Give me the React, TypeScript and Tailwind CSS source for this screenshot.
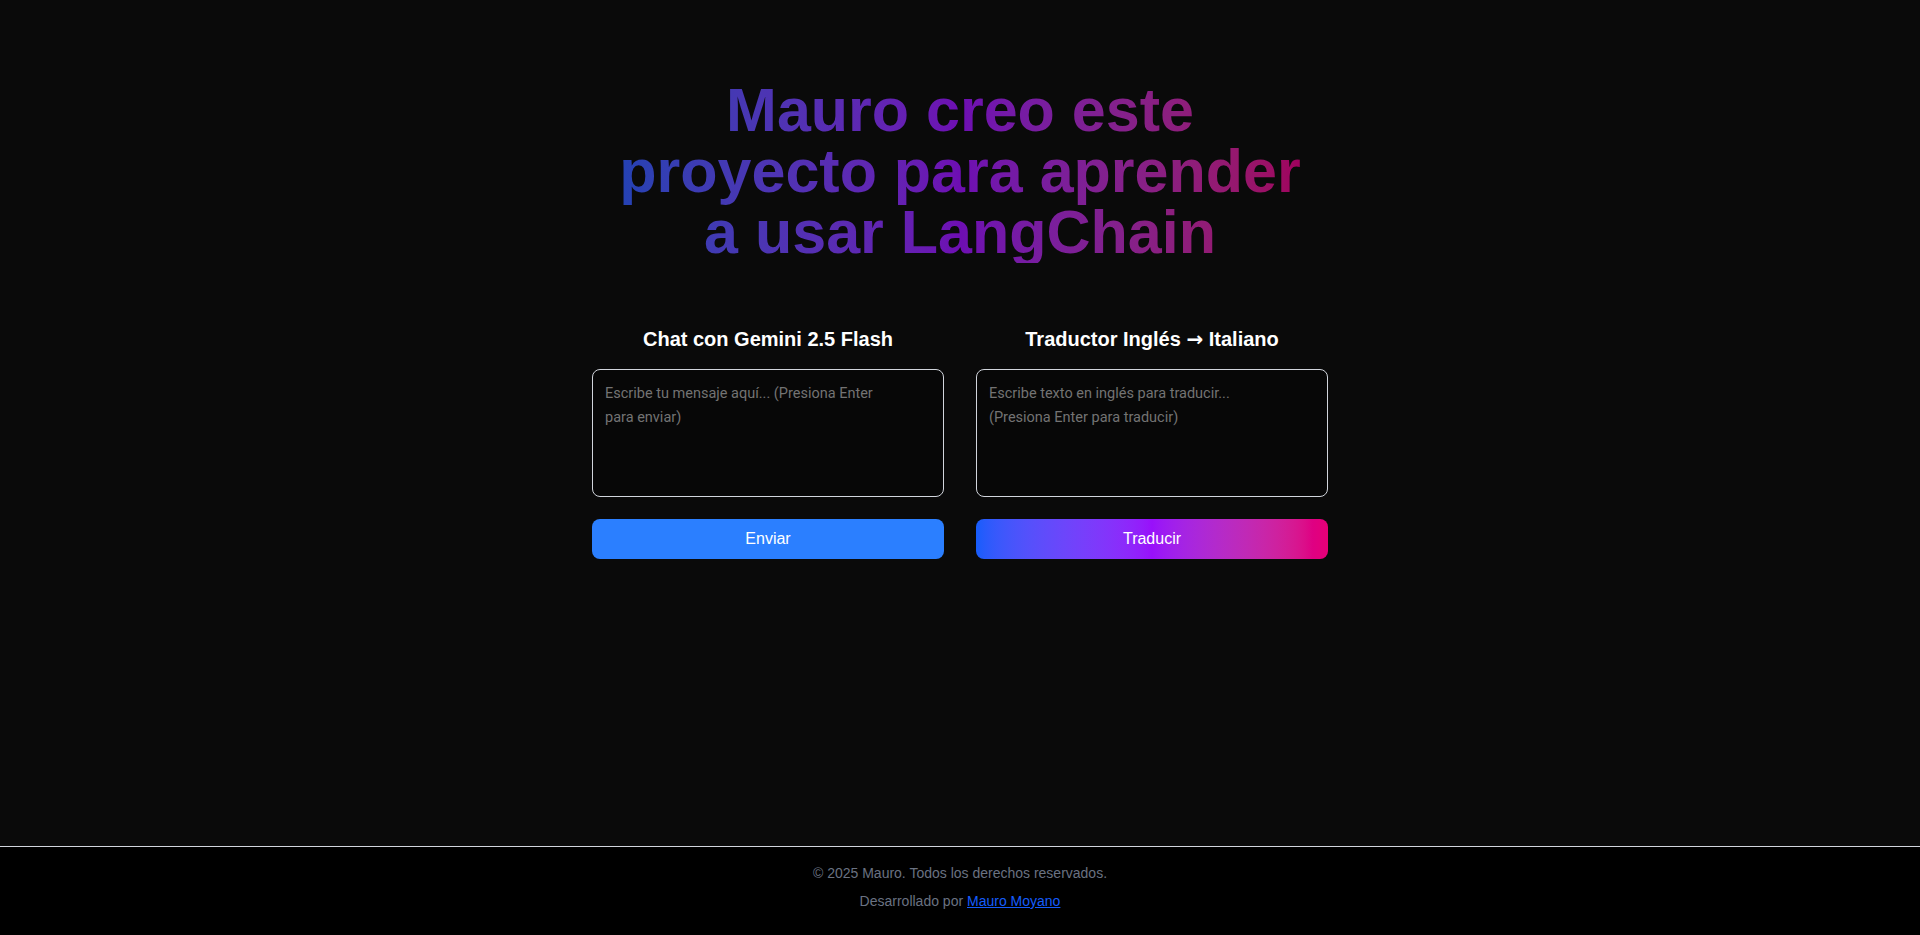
import { useState } from 'react';

function Panel({ title, placeholder, button, gradient }: { title: React.ReactNode; placeholder: string; button: string; gradient?: boolean }) {
  const [value, setValue] = useState('');
  return (
    <section className="flex flex-col">
      <h2 className="text-xl leading-7 font-bold text-white text-center mb-4">{title}</h2>
      <textarea
        value={value}
        onChange={e => setValue(e.target.value)}
        placeholder={placeholder}
        className="w-full h-32 resize-none rounded-lg border border-gray-300 bg-[#070707] px-3 py-3 font-['Roboto',Arial,sans-serif] text-[14.5px] leading-6 text-white placeholder:text-neutral-500 outline-none"
      />
      <button
        className={
          gradient
            ? 'mt-[22px] h-10 w-full rounded-lg bg-linear-to-r from-blue-600 via-purple-600 to-pink-600 text-base text-white'
            : 'mt-[22px] h-10 w-full rounded-lg bg-blue-500 text-base text-white'
        }
      >
        {button}
      </button>
    </section>
  );
}

export default function App() {
  return (
    <div className="min-h-screen flex flex-col bg-[#0a0a0a] font-['Liberation_Sans',Arial,sans-serif]">
      <main className="flex-1 pt-20">
        <div className="max-w-3xl mx-auto px-4">
          <h1 className="text-[61px] leading-[61px] font-bold text-center bg-linear-to-r from-blue-600 via-purple-600 to-pink-600 bg-clip-text text-transparent opacity-70">
            Mauro creo este
            <br />
            proyecto para aprender
            <br />
            a usar LangChain
          </h1>

          <div className="grid grid-cols-2 gap-8 mt-[62px]">
            <Panel
              title="Chat con Gemini 2.5 Flash"
              placeholder={'Escribe tu mensaje aquí... (Presiona Enter\npara enviar)'}
              button="Enviar"
            />
            <Panel
              title={
                <>
                  Traductor Inglés <span className="font-['DejaVu_Sans',sans-serif]">→</span> Italiano
                </>
              }
              placeholder={'Escribe texto en inglés para traducir...\n(Presiona Enter para traducir)'}
              button="Traducir"
              gradient
            />
          </div>
        </div>
      </main>

      <footer className="border-t border-gray-300 bg-black pt-4 pb-6 text-center text-sm text-gray-500">
        <p>© 2025 Mauro. Todos los derechos reservados.</p>
        <p className="mt-2">
          Desarrollado por{' '}
          <a href="#" className="text-blue-600 underline">
            Mauro Moyano
          </a>
        </p>
      </footer>
    </div>
  );
}
